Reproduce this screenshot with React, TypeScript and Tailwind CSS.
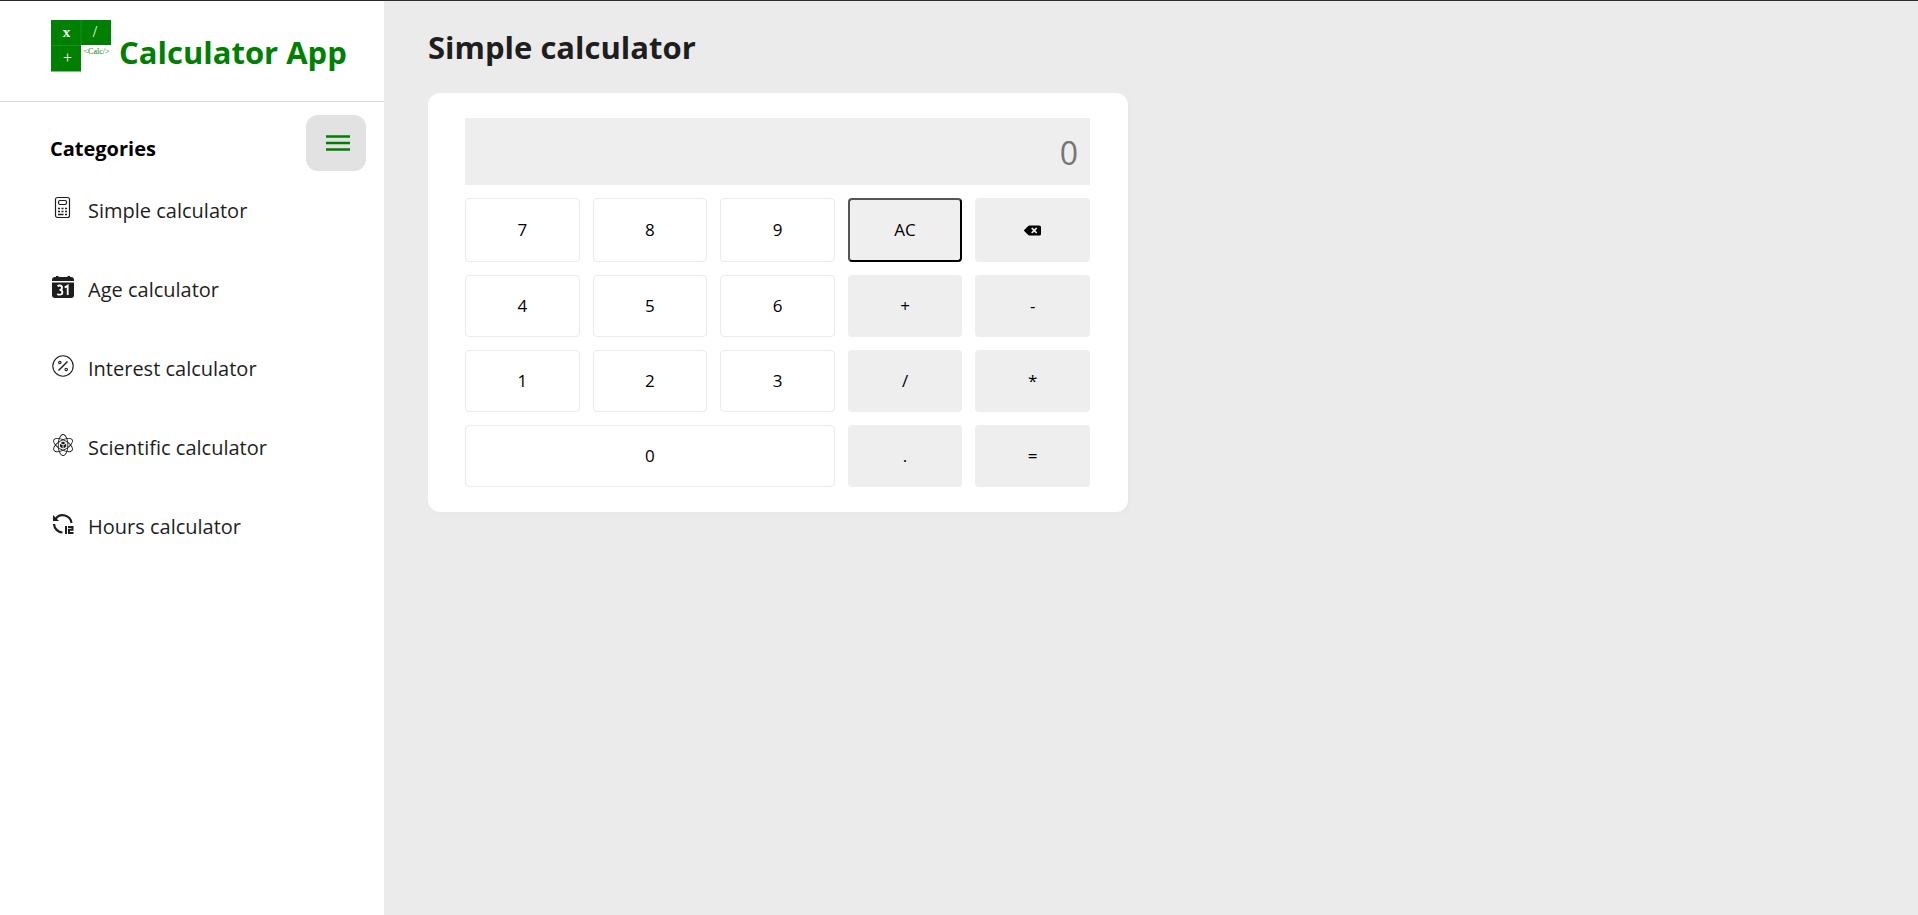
import React, { useState } from "react";
import { GiMaterialsScience } from "react-icons/gi";
import { FaBackspace } from "react-icons/fa";

function Logo() {
  return (
    <svg viewBox="0 0 60 52" className="h-[52px] w-[60px] shrink-0" aria-hidden="true">
      <rect width="60" height="25" fill="#008000" />
      <rect width="30" height="51.500" fill="#008000" />
      <path d="M0 25.500H30M30 0V25" stroke="#1c8e1c" />
      <g fill="#fff" fontFamily="Liberation Serif, serif" textAnchor="middle">
        <text x="15.500" y="17" fontSize="15" fontWeight="700">x</text>
        <text x="44" y="17" fontSize="16">/</text>
        <text x="16.500" y="43" fontSize="16">+</text>
      </g>
      <text x="45.500" y="34" fontSize="8" fill="#008000" textAnchor="middle" fontFamily="Liberation Serif, serif">&lt;Calc/&gt;</text>
    </svg>
  );
}

function CalculatorIcon() {
  return (
    <svg viewBox="0 0 24 24" className="size-6" fill="none" stroke="currentColor" aria-hidden="true">
      <rect x="4.500" y="1.500" width="14" height="20" rx="2" strokeWidth="1.200" />
      <rect x="7.500" y="4.500" width="8" height="4" rx="1.500" strokeWidth="1.200" />
      <path d="M7 12.500H9M10.500 12.500H12.500M14 12.500H16M7 15.500H9M10.500 15.500H12.500M14 15.500H16M7 18.500H12.500M14 18.500H16" strokeWidth="1.400" />
    </svg>
  );
}

function CalendarIcon() {
  return (
    <svg viewBox="0 0 24 24" className="size-6" fill="currentColor" aria-hidden="true">
      <path d="M1 6V5Q1 2 4 2H5V1H7.500V2H16.500V1H19V2H20Q23 2 23 5V6Z" />
      <path d="M1 7.500H23V20Q23 23 20 23H4Q1 23 1 20Z" />
      <path d="M6.500 11.200Q7.300 10.500 8.700 10.500Q11 10.500 11 12.700Q11 14.800 8.500 14.800Q11.400 14.800 11.400 17.300Q11.400 19.700 8.800 19.700Q7.200 19.700 6.200 19M13.700 12.500 16.700 10.700V20" fill="none" stroke="#fff" strokeWidth="1.800" />
    </svg>
  );
}

function PercentIcon() {
  return (
    <svg viewBox="0 0 24 24" className="size-6" fill="none" stroke="currentColor" strokeWidth="1.100" aria-hidden="true">
      <circle cx="12" cy="12" r="10.200" />
      <path d="M7.500 16.500 16.500 7.500" strokeWidth="1.400" />
      <circle cx="8.800" cy="8.600" r="1.200" />
      <circle cx="15.200" cy="15.400" r="1.200" />
    </svg>
  );
}

function HoursIcon() {
  return (
    <svg viewBox="0 0 24 24" className="size-6" fill="none" stroke="currentColor" strokeWidth="2.200" aria-hidden="true">
      <path d="M4.500 7A8.800 8.800 0 0 1 20.500 11M3 12A9 9 0 0 0 11.500 20.500" />
      <path d="M2 3V9H8Z" fill="currentColor" stroke="none" />
      <path d="M15 14V22M17 15H21.500V17.700H18V21H22.500" strokeWidth="2" />
    </svg>
  );
}

function MenuIcon() {
  return (
    <svg viewBox="0 0 24 18" className="h-[18px] w-6" stroke="currentColor" strokeWidth="2.400" aria-hidden="true">
      <path d="M0 2.500H24M0 9H24M0 15.500H24" />
    </svg>
  );
}

const categories = [
  { label: "Simple calculator", icon: <CalculatorIcon /> },
  { label: "Age calculator", icon: <CalendarIcon /> },
  { label: "Interest calculator", icon: <PercentIcon /> },
  { label: "Scientific calculator", icon: <GiMaterialsScience className="size-6" /> },
  { label: "Hours calculator", icon: <HoursIcon /> },
];

const keys = ["7", "8", "9", "AC", "Backspace", "4", "5", "6", "+", "-", "1", "2", "3", "/", "*", "0", ".", "="];

function keyStyle(key: string) {
  if (key === "AC") return "border-2 border-t-[#555] border-l-[#555] border-r-black border-b-black bg-[#efefef]";
  if (key === "0") return "col-span-3 border border-[#ebebeb] bg-white";
  if (/\d/.test(key)) return "border border-[#ebebeb] bg-white";
  return "bg-[#eeeeee]";
}

export default function App() {
  const [value, setValue] = useState("");

  function press(key: string) {
    if (key === "AC") setValue("");
    else if (key === "Backspace") setValue(value.slice(0, -1));
    else if (key !== "=") setValue(value + key);
  }

  return (
    <div className="flex min-h-screen border-t border-[#2b2a33] bg-[#ebebeb] font-['Open_Sans',sans-serif] text-[#1e1e1e]">
      <aside className="w-96 shrink-0 bg-white">
        <header className="flex h-[101px] gap-2 border-b border-[#d8d8d8] pt-[19px] pl-[51px]">
          <Logo />
          <span className="pt-3 text-[31px] leading-10 font-bold text-[#008000]">Calculator App</span>
        </header>
        <div className="flex justify-between pt-[13px] pr-[18px] pl-[50px]">
          <h2 className="pt-5 text-xl leading-7 font-bold text-black">Categories</h2>
          <button type="button" aria-label="Toggle menu" className="flex h-14 w-[60px] items-center justify-center rounded-xl bg-[#e2e2e2] pl-1 text-[#008000]">
            <MenuIcon />
          </button>
        </div>
        <nav>
          <ul className="flex flex-col gap-[51px] pt-[25px] pl-[50px]">
            {categories.map(({ label, icon }) => (
              <li key={label}>
                <a href="#" className="flex h-7 items-start gap-[13px] text-xl leading-[30px]">
                  <span className="flex w-[25px] justify-center">{icon}</span>
                  {label}
                </a>
              </li>
            ))}
          </ul>
        </nav>
      </aside>
      <main className="min-w-0 flex-1 px-11 pt-[26px]">
        <h1 className="text-[31px] leading-10 font-bold">Simple calculator</h1>
        <section className="mt-[26px] max-w-[700px] rounded-xl bg-white py-[25px] pr-[38px] pl-[37px] shadow-[2px_2px_4px_rgba(0,0,0,0.02)]">
          <input
            aria-label="Result"
            placeholder="0"
            readOnly
            value={value}
            className="block h-[67px] w-full bg-[#eeeeee] px-3 pt-0.5 text-right text-[32px] placeholder:text-[#757575] focus:outline-none"
          />
          <div className="mt-[13px] grid grid-cols-5 grid-rows-[64px_62px_62px_62px] gap-[13px] text-[17px] text-black">
            {keys.map((key) => (
              <button
                key={key}
                type="button"
                aria-label={key}
                onClick={() => press(key)}
                className={`flex items-center justify-center rounded-sm ${keyStyle(key)}`}
              >
                {key === "Backspace" ? <FaBackspace className="size-[17px]" /> : key}
              </button>
            ))}
          </div>
        </section>
      </main>
    </div>
  );
}
